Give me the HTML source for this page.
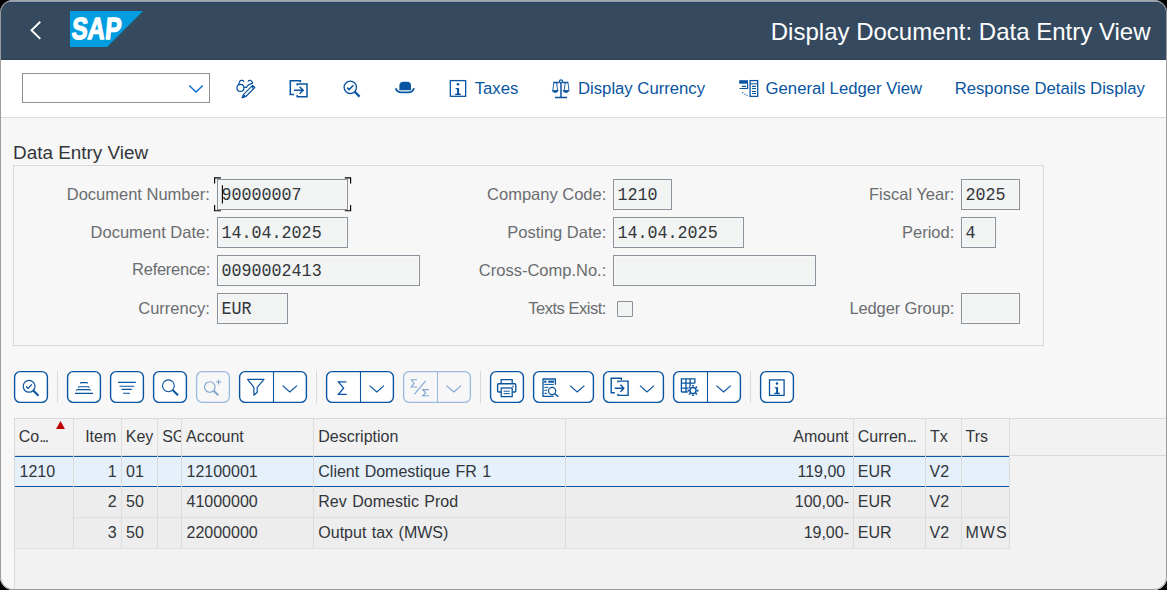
<!DOCTYPE html>
<html><head><meta charset="utf-8">
<style>
*{margin:0;padding:0;box-sizing:border-box}
html,body{width:1167px;height:590px;overflow:hidden;background:#000}
body{position:relative;font-family:"Liberation Sans",sans-serif}
.win{position:absolute;left:0;top:0;width:1167px;height:590px;border-radius:13px;overflow:hidden;background:#f7f7f7}
.frame{position:absolute;left:0;top:0;width:1167px;height:590px;border-radius:13px;border:1px solid #9c9c9c;border-top-color:#a8a4a0;pointer-events:none}
.abs{position:absolute}
.shell{position:absolute;left:0;top:0;width:1167px;height:60px;background:#354a5f;border-top:2px solid #8aa0bd;border-bottom:1px solid #2f4357;box-shadow:inset 0 1px 0 #2f4459}
.tb{position:absolute;left:0;top:60px;width:1167px;height:58px;background:#fff;border-bottom:1px solid #dcdcdc}
.t{position:absolute;white-space:nowrap;line-height:1}
.tbt{font-size:16.7px;color:#0854a0;top:80.9px}
.lbl{font-size:16.5px;color:#6a6d70;text-align:right;width:200px}
.inp{position:absolute;height:30px;border:1px solid #89919a;background:#f2f3f3;box-shadow:inset 0 0 0 1px #f8f8f8}
.val{font-family:"Liberation Mono",monospace;font-size:16.7px;color:#32363a;transform:scaleY(1.09);transform-origin:0 12.8px}
.btn{position:absolute;top:371px;height:32px;border:1px solid #0854a0;border-radius:5px;background:#fff}
.btn.dis{border-color:#9bb9da;background:#f7f7f7}
.sep{position:absolute;top:371px;width:1px;height:32px;background:#d9d9d9}
.dv{position:absolute;top:0;bottom:0;width:1px;background:#0854a0}
.dis .dv{background:#9bb9da}
svg{position:absolute;overflow:visible}
.tbl{position:absolute;left:14px;top:418px;width:1153px;height:172px;background:#f2f2f2;border-left:1px solid #d9d9d9;border-top:1px solid #d9d9d9}
.cell{font-size:16px;color:#32363a}
</style></head><body>
<div class="win">
  <div class="shell"></div>
  <!-- back chevron -->
  <svg style="left:0;top:0" width="60" height="60"><path d="M40.3 21.7 L31.5 30.3 L40.3 38.9" fill="none" stroke="#fff" stroke-width="1.9"/></svg>
  <!-- SAP logo -->
  <svg style="left:0;top:0" width="160" height="60">
    <polygon points="70,11 143,11 107,47 70,47" fill="#009de0"/>
    <text x="71" y="39.2" font-family="Liberation Sans" font-weight="bold" font-size="30.6" fill="#fff" stroke="#fff" stroke-width="1.3" stroke-linejoin="round" textLength="49.5" lengthAdjust="spacingAndGlyphs" transform="translate(71 39.2) skewX(-5) translate(-71 -39.2)">SAP</text>
  </svg>
  <div class="t" style="right:16.5px;top:20.2px;font-size:24px;color:#fff">Display Document: Data Entry View</div>

  <div class="tb"></div>
  <div class="abs" style="left:22px;top:73px;width:188px;height:30px;border:1px solid #89919a;background:#fff"></div>
  <svg style="left:0;top:0" width="1167" height="590" fill="none" stroke="#0854a0">
    <path d="M189.2 85.4 L196 92 L202.8 85.4" stroke="#0a6ed1" stroke-width="1.4"/>
    <!-- glasses pencil -->
    <circle cx="240.45" cy="87.9" r="3.45" stroke-width="1.25"/>
    <path d="M238.4 84.9 L239.8 81.2 Q240.2 80.4 241.2 80.4 L242.6 80.4 Q243.4 80.5 243.6 81.8" stroke-width="1.25"/>
    <path d="M243.9 87.4 L246.4 87.4 Q248 84.4 252.7 83.2" stroke-width="1.25"/>
    <path d="M248.2 81.6 Q248.3 80.4 249.4 80.4 L250.6 80.4 Q251.8 80.5 252.7 83.2" stroke-width="1.25"/>
    <path d="M242.1 97.7 L243.6 94.3 L252.6 85.3 L254.8 87.5 L245.8 96.5 Z" fill="#fff" stroke-width="1.15" stroke-linejoin="round"/>
    <path d="M242.1 97.7 L243.6 94.3 L245.8 96.5 Z" fill="#0854a0" stroke-width="0.9"/>
    <path d="M251.5 86.4 L253.7 88.6" stroke-width="1.1"/>
    <!-- copy transfer -->
    <path d="M294 94.4 H290.3 V80.8 H300.4 V82.2" stroke-width="1.5"/>
    <path d="M297.2 85.6 V84 H307 V96.7 H297.2 V95" stroke-width="1.5"/>
    <path d="M294 90.3 H303.2 M299.6 86.8 L303.2 90.3 L299.6 93.8" stroke-width="1.5"/>
    <!-- magnifier check -->
    <circle cx="350.3" cy="87.3" r="6.2" stroke-width="1.3"/>
    <path d="M354.6 91.6 L359.6 96.6" stroke-width="2.2"/>
    <path d="M347.2 87.6 L349.2 89.6 L353.3 85.3" stroke-width="1.5"/>
    <!-- hat -->
    <path d="M399.4 90.2 V85.5 C399.4 83 401 81.8 403.5 81.8 H407 C409.6 81.8 411 83 411 85.5 V90.2 Z" fill="#0854a0" stroke="none"/>
    <path d="M395.6 88.3 Q397.5 92.4 401.5 92.4 H408.5 Q412.5 92.4 414 88.3" stroke-width="1.8"/>
    <!-- info -->
    <rect x="450.35" y="80.6" width="15.3" height="15.7" stroke-width="1.3"/>
    <circle cx="458" cy="84.2" r="1.3" fill="#0854a0" stroke="none"/>
    <path d="M455.6 88.6 H458.5" stroke-width="1.2"/>
    <path d="M458.1 88.2 V94" stroke-width="2.1"/>
    <path d="M455.2 94.3 H460.8" stroke-width="1.4"/>
    <!-- scales -->
    <circle cx="561" cy="81.3" r="1.5" stroke-width="1.2"/>
    <path d="M561 82.8 V97 M553.2 82.6 H559.5 M562.5 82.6 H568.4 M555 97.4 H567" stroke-width="1.5"/>
    <path d="M553.8 83 L552.8 90.4 M556.6 83 L557.6 90.4 M565.2 83 L564.2 90.4 M568 83 L569 90.4" stroke-width="0.9"/>
    <path d="M552.2 90.5 H558.3 Q557.6 92.4 555.2 92.4 Q552.9 92.4 552.2 90.5 Z M563 90.5 H569.1 Q568.4 92.4 566 92.4 Q563.7 92.4 563 90.5 Z" fill="#0854a0" stroke-width="0.8"/>
    <!-- general ledger -->
    <rect x="739.2" y="80.2" width="8.8" height="3.5" fill="#0854a0" stroke="none"/>
    <path d="M747.6 83.5 V88.5 H739.5 M742 86.3 H746" stroke-width="1.2"/>
    <path d="M742.2 92.4 L743.2 93 M744.5 94 L745.4 94.6 M746.6 95.3 L747.5 95.8" stroke-width="1.2"/>
    <rect x="750.1" y="80.6" width="7.6" height="15.8" stroke-width="1.3"/>
    <path d="M750.1 83.8 H757.7 M752 86.4 H756 M752 88.5 H756 M752 91.5 H756 M752 93.5 H756" stroke-width="1.1"/>
  </svg>
  <div class="t tbt" style="left:474.7px">Taxes</div>
  <div class="t tbt" style="left:578px">Display Currency</div>
  <div class="t tbt" style="left:765.6px">General Ledger View</div>
  <div class="t tbt" style="left:954.7px">Response Details Display</div>
  <div class="t" style="left:13px;top:143.5px;font-size:18.9px;color:#32363a">Data Entry View</div>
  <div class="abs" style="left:13px;top:165px;width:1031px;height:181px;border:1px solid #d9d9d9"></div>
  <!-- labels: baseline rows 200,238,276,314 ; top = baseline-13.54 -->
  <div class="t lbl" style="left:9.8px;top:185.8px">Document Number:</div>
  <div class="t lbl" style="left:9.8px;top:223.8px">Document Date:</div>
  <div class="t lbl" style="left:10.1px;top:261.3px;letter-spacing:-0.27px">Reference:</div>
  <div class="t lbl" style="left:9.8px;top:299.8px">Currency:</div>
  <div class="t lbl" style="left:406.3px;top:185.8px">Company Code:</div>
  <div class="t lbl" style="left:406.3px;top:223.8px">Posting Date:</div>
  <div class="t lbl" style="left:406.3px;top:261.8px">Cross-Comp.No.:</div>
  <div class="t lbl" style="left:405.8px;top:299.8px;letter-spacing:-0.5px">Texts Exist:</div>
  <div class="t lbl" style="left:754.3px;top:185.8px">Fiscal Year:</div>
  <div class="t lbl" style="left:754.3px;top:223.8px">Period:</div>
  <div class="t lbl" style="left:754.2px;top:299.8px;letter-spacing:-0.13px">Ledger Group:</div>
  <div class="inp" style="left:217px;top:179px;width:131px;height:31px"></div>
  <div class="inp" style="left:217px;top:217px;width:131px;height:31px"></div>
  <div class="inp" style="left:217px;top:255px;width:203px;height:31px"></div>
  <div class="inp" style="left:217px;top:293px;width:71px;height:31px"></div>
  <div class="inp" style="left:613px;top:179px;width:59px;height:31px"></div>
  <div class="inp" style="left:613px;top:217px;width:131px;height:31px"></div>
  <div class="inp" style="left:613px;top:255px;width:203px;height:31px"></div>
  <div class="abs" style="left:617px;top:301px;width:16px;height:16px;border:1px solid #89919a;background:#f2f3f3;border-radius:1px"></div>
  <div class="inp" style="left:961px;top:179px;width:59px;height:31px"></div>
  <div class="inp" style="left:961px;top:217px;width:35px;height:31px"></div>
  <div class="inp" style="left:961px;top:293px;width:59px;height:31px"></div>
  <!-- values: mono baseline offset 0.767*16=12.27 -->
  <div class="t val" style="left:221.5px;top:187.5px">90000007</div>
  <div class="t val" style="left:221.5px;top:225.5px">14.04.2025</div>
  <div class="t val" style="left:221.5px;top:263.5px">0090002413</div>
  <div class="t val" style="left:221.5px;top:301.5px">EUR</div>
  <div class="t val" style="left:617.5px;top:187.5px">1210</div>
  <div class="t val" style="left:617.5px;top:225.5px">14.04.2025</div>
  <div class="t val" style="left:965.5px;top:187.5px">2025</div>
  <div class="t val" style="left:965.5px;top:225.5px">4</div>
  <!-- focus brackets + cursor -->
  <svg style="left:0;top:0" width="1167" height="590" fill="none" stroke="#000" stroke-width="1.15">
    <path d="M214.6 183.6 V177.9 H220.9 M344.8 177.9 H350.6 V183.6 M214.6 205.1 V210.7 H220.9 M344.8 210.7 H350.6 V205.1"/>
    <path d="M222.4 185.3 V203.6" stroke-width="1.1"/>
  </svg>
  <!-- table toolbar -->
  <svg style="left:0;top:0" width="1167" height="590">
    <rect x="14.6" y="371.6" width="32.8" height="30.8" rx="5.6" fill="#fff" stroke="#0854a0" stroke-width="1.4"/>
    <rect x="67.6" y="371.6" width="32.8" height="30.8" rx="5.6" fill="#fff" stroke="#0854a0" stroke-width="1.4"/>
    <rect x="110.6" y="371.6" width="32.8" height="30.8" rx="5.6" fill="#fff" stroke="#0854a0" stroke-width="1.4"/>
    <rect x="153.6" y="371.6" width="32.8" height="30.8" rx="5.6" fill="#fff" stroke="#0854a0" stroke-width="1.4"/>
    <rect x="196.6" y="371.6" width="32.8" height="30.8" rx="5.6" fill="#f7f7f7" stroke="#9bb9da" stroke-width="1.3"/>
    <rect x="239.6" y="371.6" width="66.8" height="30.8" rx="5.6" fill="#fff" stroke="#0854a0" stroke-width="1.4"/>
    <path d="M273.5 372 V402" stroke="#0854a0" stroke-width="1.1"/>
    <rect x="326.6" y="371.6" width="66.8" height="30.8" rx="5.6" fill="#fff" stroke="#0854a0" stroke-width="1.4"/>
    <path d="M360.5 372 V402" stroke="#0854a0" stroke-width="1.1"/>
    <rect x="403.6" y="371.6" width="66.8" height="30.8" rx="5.6" fill="#f7f7f7" stroke="#9bb9da" stroke-width="1.3"/>
    <path d="M437.5 372 V402" stroke="#9bb9da" stroke-width="1.1"/>
    <rect x="490.6" y="371.6" width="32.8" height="30.8" rx="5.6" fill="#fff" stroke="#0854a0" stroke-width="1.4"/>
    <rect x="533.6" y="371.6" width="59.8" height="30.8" rx="5.6" fill="#fff" stroke="#0854a0" stroke-width="1.4"/>
    <rect x="603.6" y="371.6" width="59.8" height="30.8" rx="5.6" fill="#fff" stroke="#0854a0" stroke-width="1.4"/>
    <rect x="673.6" y="371.6" width="66.8" height="30.8" rx="5.6" fill="#fff" stroke="#0854a0" stroke-width="1.4"/>
    <path d="M707.5 372 V402" stroke="#0854a0" stroke-width="1.1"/>
    <rect x="760.6" y="371.6" width="32.8" height="30.8" rx="5.6" fill="#fff" stroke="#0854a0" stroke-width="1.4"/>
  </svg>
  <div class="sep" style="left:57px"></div>
  <div class="sep" style="left:316px"></div>
  <div class="sep" style="left:480px"></div>
  <div class="sep" style="left:750px"></div>
  <svg style="left:0;top:0" width="1167" height="590" fill="none" stroke="#0854a0" stroke-width="1.2">
    <!-- b1 -->
    <circle cx="29.1" cy="386.3" r="5.9" stroke-width="1.15"/>
    <path d="M33.3 390.5 L38.5 395.7" stroke-width="2"/>
    <path d="M26.1 386.4 L28.1 388.4 L31.9 384.4" stroke-width="1.35"/>
    <!-- b2 -->
    <path d="M80.1 383.5 L80.8 382.6 H87 L87.7 383.5 M78.3 387.6 L79 386.7 H88.6 L89.3 387.6 M76.3 390.5 L77 389.6 H89.9 L90.6 390.5 M75 393.4 H93" stroke-width="1.1" stroke-linejoin="round"/>
    <!-- b3 -->
    <path d="M118 382.4 H135.8 M119.5 386.2 H134.2 M121.5 389.4 H131.8 M123 393.3 H130" stroke-width="1.1"/>
    <!-- b4 -->
    <circle cx="168.4" cy="385.8" r="5.9" stroke-width="1.1"/>
    <path d="M172.6 390 L178 395.2" stroke-width="2"/>
    <!-- b5 disabled -->
    <g stroke="#80a6d0">
    <circle cx="209.8" cy="387" r="5.3" stroke-width="1.1"/>
    <path d="M213.6 390.8 L218.2 395.3" stroke-width="1.9"/>
    <path d="M218.6 379.4 V384.6 M216 382 H221.2" stroke-width="1.1"/>
    </g>
    <!-- filter -->
    <path d="M247.6 379.4 H264 L257.2 387.3 V392.2 L253.9 395.2 V387.3 Z" stroke-width="1.2" stroke-linejoin="round"/>
    <path d="M282.6 385.6 L289.8 392 L297 385.6" stroke-width="1.2"/>
    <!-- sigma -->
    <path d="M346.4 381.9 H338.4 L343.6 388.2 L338.4 394.4 H346.8" stroke-width="1.3"/>
    <path d="M369.6 385.6 L376.8 392 L384 385.6" stroke-width="1.2"/>
    <!-- subtotal disabled -->
    <g stroke="#80a6d0" stroke-width="1.1">
    <path d="M417 379.8 H411.2 L414.2 383.4 L411.2 387 H417.2"/>
    <path d="M414.5 394.2 L425.6 380.8"/>
    <path d="M428.7 389.6 H422.6 L425.6 392.8 L422.6 395.8 H428.9"/>
    <path d="M446.4 385.6 L453.8 392 L461.2 385.6" stroke-width="1.2"/>
    </g>
    <!-- print -->
    <path d="M501.2 383.5 V379.6 H512.2 V383.5" stroke-width="1.3"/>
    <path d="M501 392 H498.6 Q497.6 392 497.6 391 V385 Q497.6 383.8 498.8 383.8 H514.6 Q515.8 383.8 515.8 385 V391 Q515.8 392 514.8 392 H512.4" stroke-width="1.4"/>
    <rect x="501.2" y="388" width="11" height="8.6" stroke-width="1.3"/>
    <path d="M503.6 391.2 H509.8 M503.6 393.6 H509.8" stroke-width="1"/>
    <path d="M512.2 386.3 H514" stroke-width="1"/>
    <!-- layout -->
    <path d="M553.6 396.4 H543 V379 H555.4 V384.8" stroke-width="1.3"/>
    <rect x="544.2" y="380.6" width="2.2" height="2.1" fill="#0854a0" stroke="none"/>
    <rect x="548.2" y="380.6" width="5.8" height="2.1" fill="#0854a0" stroke="none"/>
    <path d="M544.3 384.4 H553.8 M544.3 387.3 H548.2 M544.3 390.3 H547.2 M544.3 393.3 H547.2" stroke-width="1"/>
    <circle cx="552.1" cy="391" r="3.6" stroke-width="1.2"/>
    <path d="M554.8 393.7 L558.4 396.8" stroke-width="1.5"/>
    <path d="M570 385.6 L577.2 392 L584.4 385.6" stroke-width="1.2"/>
    <!-- export -->
    <path d="M614.8 392.8 H611.2 V378.3 H621.4 V380" stroke-width="1.4"/>
    <path d="M618 382.5 V381.1 H628.1 V395.4 H618 V393.8" stroke-width="1.4"/>
    <path d="M614.8 388.3 H623.8 M620.4 384.8 L623.8 388.3 L620.4 391.8" stroke-width="1.4"/>
    <path d="M640 385.6 L647 392 L654 385.6" stroke-width="1.2"/>
    <!-- settings grid -->
    <path d="M681.4 392 V378.9 H694.9 V383.2 M681.4 383.2 H694.9 M681.4 388.1 H688.6 M681.4 392 H687.6 M686 378.9 V392 M690.1 378.9 V386.2" stroke-width="1.3"/>
    <circle cx="693" cy="390.6" r="3.1" stroke-width="1.5" fill="#fff"/>
    <path d="M697.00 390.60 L698.50 390.60 M695.83 393.43 L696.89 394.49 M693.00 394.60 L693.00 396.10 M690.17 393.43 L689.11 394.49 M689.00 390.60 L687.50 390.60 M690.17 387.77 L689.11 386.71 M693.00 386.60 L693.00 385.10 M695.83 387.77 L696.89 386.71" stroke-width="1.7"/>
    <path d="M716.4 385.6 L723.6 392 L730.8 385.6" stroke-width="1.2"/>
    <!-- info -->
    <rect x="769.5" y="379.9" width="14.6" height="15.5" stroke-width="1.3"/>
    <circle cx="777" cy="383.6" r="1.25" fill="#0854a0" stroke="none"/>
    <path d="M774.8 387.8 H777.5" stroke-width="1.2"/>
    <path d="M777.1 387.4 V393" stroke-width="2"/>
    <path d="M774.3 393.4 H779.8" stroke-width="1.4"/>
  </svg>

  <!-- table -->
  <div class="tbl"></div>
  <div class="abs" style="left:15px;top:419px;width:1152px;height:37px;background:#f2f2f2"></div>
  <div class="abs" style="left:15px;top:455px;width:1152px;height:1px;background:#d9d9d9"></div>
  <div class="abs" style="left:15px;top:456px;width:995px;height:31px;background:#e5f0fa;border-top:1px solid #0854a0;border-bottom:1px solid #0854a0"></div>
  <div class="abs" style="left:15px;top:487px;width:995px;height:62px;background:#ededed;border-bottom:1px solid #e0e0e0"></div>
  <div class="abs" style="left:74px;top:517px;width:936px;height:1px;background:#e0e0e0"></div>
  <div class="abs" style="left:73px;top:419px;width:1px;height:130px;background:#dcdcdc"></div>
  <div class="abs" style="left:121px;top:419px;width:1px;height:130px;background:#dcdcdc"></div>
  <div class="abs" style="left:157px;top:419px;width:1px;height:130px;background:#dcdcdc"></div>
  <div class="abs" style="left:181px;top:419px;width:1px;height:130px;background:#dcdcdc"></div>
  <div class="abs" style="left:313px;top:419px;width:1px;height:130px;background:#dcdcdc"></div>
  <div class="abs" style="left:565px;top:419px;width:1px;height:130px;background:#dcdcdc"></div>
  <div class="abs" style="left:853px;top:419px;width:1px;height:130px;background:#dcdcdc"></div>
  <div class="abs" style="left:925px;top:419px;width:1px;height:130px;background:#dcdcdc"></div>
  <div class="abs" style="left:961px;top:419px;width:1px;height:130px;background:#dcdcdc"></div>
  <div class="abs" style="left:1009px;top:419px;width:1px;height:130px;background:#dcdcdc"></div>
  <svg style="left:0;top:0" width="1167" height="590"><polygon points="56,429 65,429 60.5,421" fill="#c00000"/></svg>
  <div class="t cell" style="left:18.7px;top:428.5px">Co<span style="letter-spacing:-1.6px">...</span></div>
  <div class="t cell" style="left:15px;width:101.3px;text-align:right;top:428.5px">Item</div>
  <div class="t cell" style="left:125.8px;top:428.5px">Key</div>
  <div class="t cell" style="left:162.2px;top:428.5px;width:18.8px;overflow:hidden">SG</div>
  <div class="t cell" style="left:186px;top:428.5px">Account</div>
  <div class="t cell" style="left:318.3px;word-spacing:1px;top:428.5px">Description</div>
  <div class="t cell" style="left:700px;width:148.5px;text-align:right;top:428.5px">Amount</div>
  <div class="t cell" style="left:857.8px;top:428.5px">Curren<span style="letter-spacing:-1.6px">...</span></div>
  <div class="t cell" style="left:930px;top:428.5px">Tx</div>
  <div class="t cell" style="left:965.5px;top:428.5px">Trs</div>

  <div class="t cell" style="left:19.5px;top:463.5px">1210</div>
  <div class="t cell" style="left:15px;width:101.7px;text-align:right;top:463.5px">1</div>
  <div class="t cell" style="left:126px;top:463.5px">01</div>
  <div class="t cell" style="left:186.5px;top:463.5px">12100001</div>
  <div class="t cell" style="left:318.3px;word-spacing:1px;top:463.5px">Client Domestique FR 1</div>
  <div class="t cell" style="left:700px;width:150.5px;text-align:right;top:463.5px">119,00<span style="visibility:hidden">-</span></div>
  <div class="t cell" style="left:857.8px;top:463.5px">EUR</div>
  <div class="t cell" style="left:929.5px;top:463.5px">V2</div>

  <div class="t cell" style="left:15px;width:101.7px;text-align:right;top:493.5px">2</div>
  <div class="t cell" style="left:126px;top:493.5px">50</div>
  <div class="t cell" style="left:186.5px;top:493.5px">41000000</div>
  <div class="t cell" style="left:318.3px;word-spacing:1px;top:493.5px">Rev Domestic Prod</div>
  <div class="t cell" style="left:700px;width:149px;text-align:right;top:493.5px">100,00-</div>
  <div class="t cell" style="left:857.8px;top:493.5px">EUR</div>
  <div class="t cell" style="left:929.5px;top:493.5px">V2</div>

  <div class="t cell" style="left:15px;width:101.7px;text-align:right;top:525px">3</div>
  <div class="t cell" style="left:126px;top:525px">50</div>
  <div class="t cell" style="left:186.5px;top:525px">22000000</div>
  <div class="t cell" style="left:318.3px;word-spacing:1px;top:525px">Output tax (MWS)</div>
  <div class="t cell" style="left:700px;width:149px;text-align:right;top:525px">19,00-</div>
  <div class="t cell" style="left:857.8px;top:525px">EUR</div>
  <div class="t cell" style="left:929.5px;top:525px">V2</div>
  <div class="t cell" style="left:965.5px;top:525px;letter-spacing:1px">MWS</div>
  <div class="frame"></div>
</div>
</body></html>
